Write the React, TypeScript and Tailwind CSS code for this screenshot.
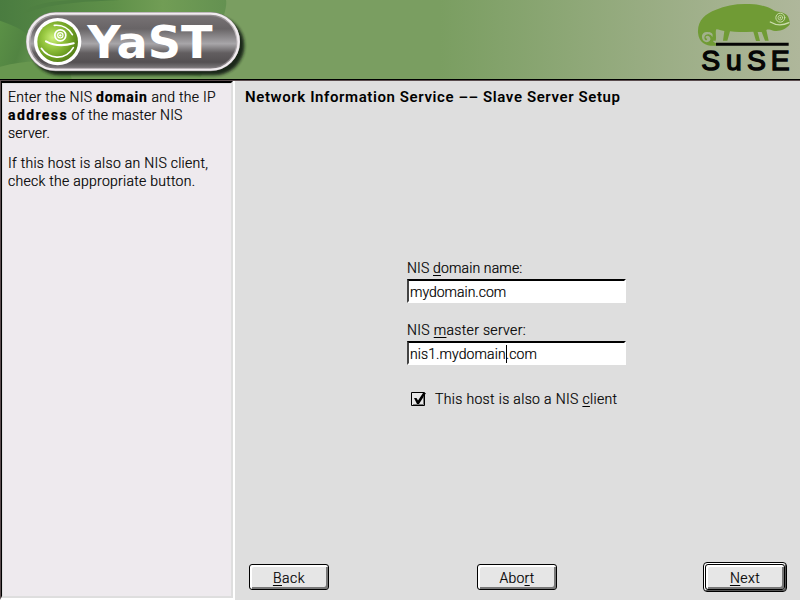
import type { ReactNode } from "react";

function YastLogo() {
  return (
    <svg className="block h-[79px] w-[260px] shrink-0" viewBox="0 0 780 237" aria-label="YaST">
      <defs>
        <linearGradient id="pill" x1="0" y1="0" x2="0" y2="1">
          <stop offset="0" stopColor="#777274" />
          <stop offset="0.25" stopColor="#686466" />
          <stop offset="0.54" stopColor="#a8a6a9" />
          <stop offset="0.72" stopColor="#625e60" />
          <stop offset="0.9" stopColor="#545052" />
          <stop offset="1" stopColor="#777476" />
        </linearGradient>
        <linearGradient id="rim" x1="0" y1="0" x2="0" y2="1">
          <stop offset="0" stopColor="#8a8587" />
          <stop offset="0.4" stopColor="#c5bfc3" />
          <stop offset="1" stopColor="#777175" />
        </linearGradient>
        <radialGradient id="ball" cx="0.38" cy="0.4" r="0.65">
          <stop offset="0" stopColor="#cdf07c" />
          <stop offset="0.35" stopColor="#9aca43" />
          <stop offset="0.75" stopColor="#6c9d21" />
          <stop offset="1" stopColor="#557f18" />
        </radialGradient>
        <linearGradient id="leafA" x1="0" y1="0" x2="1" y2="0.4">
          <stop offset="0" stopColor="#5b9146" />
          <stop offset="0.5" stopColor="#528442" />
          <stop offset="1" stopColor="#6b9955" />
        </linearGradient>
        <linearGradient id="leafB" x1="0" y1="0" x2="1" y2="0">
          <stop offset="0" stopColor="#4a7c40" />
          <stop offset="0.5" stopColor="#5f9049" />
          <stop offset="0.72" stopColor="#719d55" />
          <stop offset="1" stopColor="#649151" />
        </linearGradient>
        <filter id="soft" x="-10%" y="-20%" width="120%" height="140%">
          <feGaussianBlur stdDeviation="5" />
        </filter>
      </defs>
      <rect width="780" height="237" fill="#7a9e61" />
      <path d="M0 0H678C684 22 660 90 600 237H0Z" fill="url(#leafB)" />
      <path d="M0 62C90 92 130 130 150 237H0Z" fill="url(#leafA)" />
      <path d="M70 40C170 5 270 5 360 0H220C130 5 90 18 70 40Z" fill="#4f8042" />
      <path d="M0 200C150 160 210 205 250 237H0Z" fill="#68974f" />
      <path d="M210 216C380 200 530 218 650 237H215Z" fill="#77a05d" />
      <rect x="90" y="48" width="643" height="178" rx="89" fill="#172016" opacity="0.95" filter="url(#soft)" />
      <rect x="78" y="36" width="642" height="178" rx="89" fill="url(#rim)" />
      <rect x="83" y="41" width="633" height="168" rx="84" fill="none" stroke="#f1ecef" strokeWidth="7" />
      <rect x="91" y="48" width="618" height="154" rx="77" fill="url(#pill)" />
      <circle cx="173" cy="125" r="71" fill="#fff" />
      <circle cx="173" cy="125" r="61" fill="url(#ball)" />
      <g fill="none" stroke="#fff" strokeLinecap="round">
        <path d="M163 76C187 74 207 86 217 104" strokeWidth="5" />
        <circle cx="181" cy="106" r="16.5" strokeWidth="5" />
        <circle cx="181" cy="106" r="8" strokeWidth="3.5" />
        <path d="M138 124C154 133 179 142 221 130" strokeWidth="6.5" />
        <path d="M124 145C144 175 194 186 220 143" strokeWidth="5" />
      </g>
      <circle cx="181" cy="106" r="3.5" fill="#fff" />
      <text x="262" y="174" fill="#fff" fontFamily="DejaVu Sans, sans-serif" fontWeight="700" fontSize="132" textLength="376" lengthAdjust="spacingAndGlyphs">YaST</text>
    </svg>
  );
}

function SuseLogo() {
  return (
    <svg className="block h-[79px] w-[110px] shrink-0" viewBox="0 0 330 237" aria-label="SuSE">
      <path
        fill="#709b35"
        d="M78 137C51 139 27 131 24 98C22 62 45 41 78 29C111 14 151 9 192 13C207 14 218 17 234 22C243 26 250 31 258 34C268 35 286 39 293 48C297 54 299 64 300 72C288 89 268 95 250 92C241 90 235 87 229 90L236 122H225L215 96H203L210 123H198L190 95C166 95 143 98 120 94L112 122H99L103 93C91 91 85 87 79 88C75 95 80 110 77 122H66L68 104C65 96 57 96 48 96C35 98 33 111 39 121C45 129 58 128 61 119C63 111 54 104 48 109C45 112 48 117 52 116L50 121C42 121 41 109 47 105C56 99 69 106 69 119C68 125 73 129 81 130Z"
      />
      <g fill="none" stroke="#cbdcac" strokeLinecap="round">
        <circle cx="271" cy="53" r="13.5" strokeWidth="3" />
        <circle cx="271" cy="53" r="7" strokeWidth="2.5" />
        <path d="M241 66C259 77 280 76 297 68" strokeWidth="4" />
      </g>
      <circle cx="271" cy="53" r="2.5" fill="#cbdcac" />
      <path d="M78 128H296V137H78Z" fill="#050505" />
      <text y="211" x="34 108 171 242" fill="#050505" stroke="#050505" strokeWidth="4" fontFamily="Liberation Sans, Arial, sans-serif" fontWeight="400" fontSize="85">SuSE</text>
    </svg>
  );
}

function Key({ children }: { children: ReactNode }) {
  return <span className="underline decoration-1 underline-offset-2">{children}</span>;
}

function Field({ label, children }: { label: ReactNode; children: ReactNode }) {
  return (
    <div className="h-[62px]">
      <div className="h-[20px] leading-[18px]">{label}</div>
      <div className="h-[24px] w-[219px] border-2 border-t-black border-r-white border-b-white border-l-[#444] bg-white pl-px leading-[22px]">
        {children}
      </div>
    </div>
  );
}

function Button({ children, primary = false }: { children: ReactNode; primary?: boolean }) {
  const face = (
    <span className="flex h-[26px] w-20 items-center justify-center rounded-[3px] border border-black bg-[#e6e6e6] pt-[3px] shadow-[inset_2px_2px_0_#fff,inset_-2px_-2px_0_#777]">
      {children}
    </span>
  );
  return (
    <button className="block">
      {primary ? (
        <span className="block rounded-[4px] border border-black bg-[#eee] p-px shadow-[inset_1px_1px_0_#fff,inset_-1px_-1px_0_#555]">
          {face}
        </span>
      ) : face}
    </button>
  );
}

export default function App() {
  return (
    <div className="flex h-[600px] w-[800px] flex-col overflow-hidden bg-[#dedede] font-[Roboto,sans-serif] text-[14px] font-light text-black [-webkit-text-stroke:0.2px_black]">
      <header className="flex h-[81px] shrink-0 justify-between border-b border-[#5a4c4e] bg-linear-to-r from-[#7a9e61] from-55% to-[#afb79b] [-webkit-text-stroke:0]">
        <div className="flex w-full justify-between border-b border-black">
          <YastLogo />
          <SuseLogo />
        </div>
      </header>
      <div className="flex min-h-0 flex-1">
        <aside className="w-[235px] shrink-0 border-r-2 border-b-2 border-l border-r-white border-b-white border-l-[#5a4c4e]">
          <div className="h-full border-t-2 border-r-2 border-b-2 border-l border-t-black border-r-[#dedede] border-b-[#dedede] border-l-black bg-[#eeeaee] pt-[5px] pl-[6px] leading-[18px] whitespace-nowrap shadow-[inset_1px_1px_0_#dedede]">
            <p className="mb-3">
              <span className="block tracking-[0.3px]">Enter the NIS <b className="font-bold tracking-[0.8px]">domain</b> and the IP</span>
              <span className="block tracking-[0.2px]"><b className="font-bold tracking-[1.4px]">address</b> of the master NIS</span>
              <span className="block tracking-[0.25px]">server.</span>
            </p>
            <p>
              <span className="block tracking-[0.28px]">If this host is also an NIS client,</span>
              <span className="block tracking-[0.27px]">check the appropriate button.</span>
            </p>
          </div>
        </aside>
        <main className="flex flex-1 flex-col pl-[10px]">
          <h1 className="mt-[7px] h-[18px] text-[15px] leading-[18px] font-semibold tracking-[0.6px] whitespace-nowrap [-webkit-text-stroke:0]">Network Information Service –– Slave Server Setup</h1>
          <form className="mt-[153px] ml-[162px] w-[230px]">
            <Field label={<span className="tracking-[0.15px]">NIS <Key>d</Key>omain name:</span>}>
              <span className="tracking-[0]">mydomain.com</span>
            </Field>
            <Field label={<span className="tracking-[0.33px]">NIS <Key>m</Key>aster server:</span>}>
              <span className="flex items-center tracking-[0.1px]">
                nis1.mydomain<span className="-mr-px h-[18px] w-px bg-black" />.com
              </span>
            </Field>
            <label className="mt-[6px] flex h-[20px] items-center">
              <svg className="ml-1 size-[15px]" viewBox="0 0 15 15">
                <path d="M.5.5H13.5V13.5H.5Z" fill="#e8e8e8" stroke="#000" />
                <path d="M2 12.5H12.5V5" fill="none" stroke="#777" />
                <path d="M3 6H5.5L7 8.5L12 1H15L8 12H6Z" />
              </svg>
              <span className="ml-[9px] tracking-[0.34px]">This host is also a NIS <Key>c</Key>lient</span>
            </label>
          </form>
          <footer className="mt-auto mb-[8px] flex items-center">
            <div className="ml-[4px]"><Button>
              <span className="tracking-[0.5px]"><Key>B</Key>ack</span></Button></div>
            <div className="ml-[148px]"><Button>
              <span className="tracking-[0.2px]">Abo<Key>r</Key>t</span></Button></div>
            <div className="ml-[146px]"><Button primary>
              <span className="tracking-[0.4px]"><Key>N</Key>ext</span></Button></div>
          </footer>
        </main>
      </div>
    </div>
  );
}
